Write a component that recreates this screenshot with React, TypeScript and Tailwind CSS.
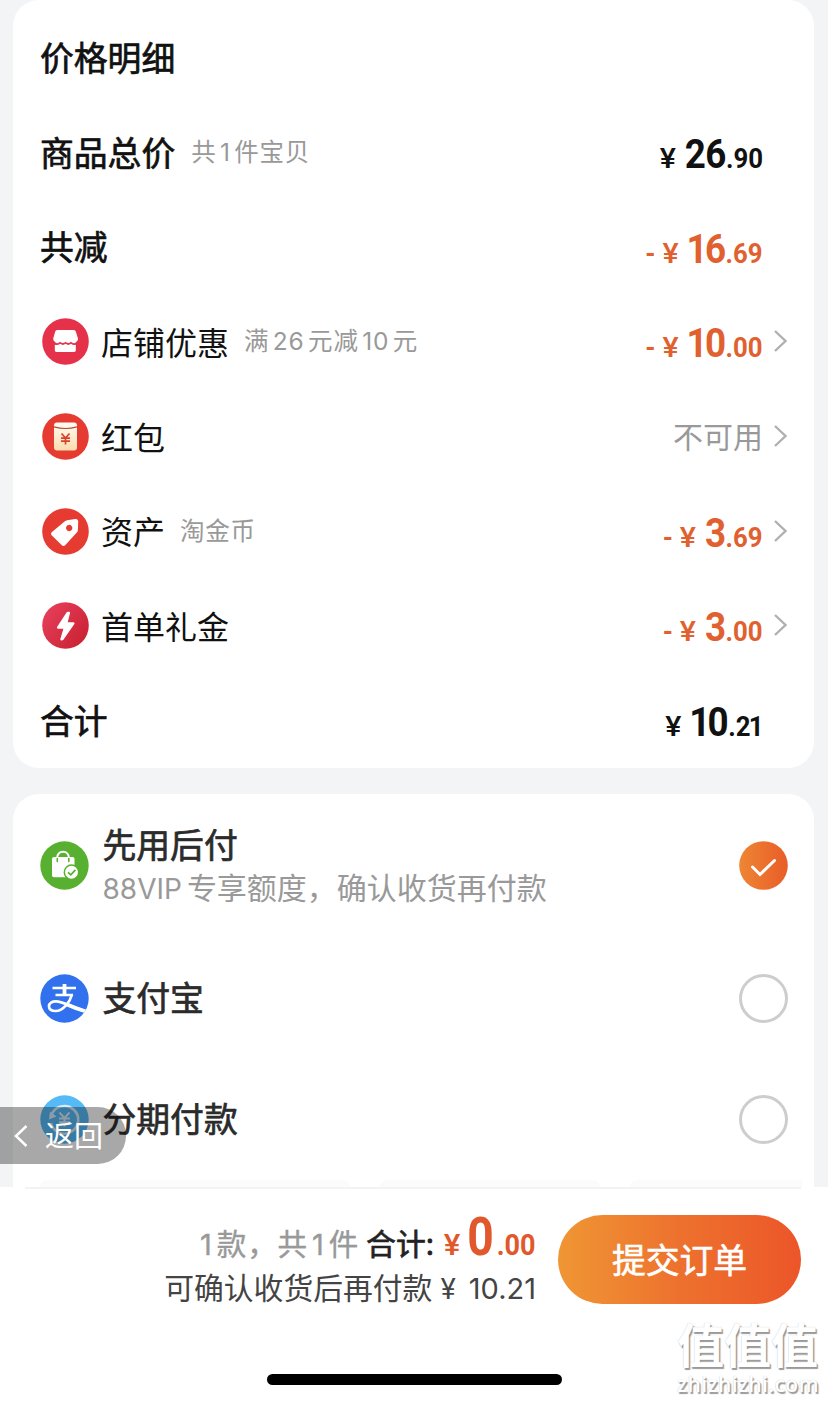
import type { ReactNode } from 'react';

const CJK = "font-['Noto_Sans_CJK_SC',sans-serif]";
const MEDIUM = '[-webkit-text-stroke:0.7px_currentColor]';

/* Sets the figure 1 narrower than the other figures. */
function Digits({ value, narrow }: { value: string; narrow: string }) {
  return (
    <>
      {value.split('').map((c, i) => (
        <span key={i} className={c === '1' ? narrow : ''}>{c}</span>
      ))}
    </>
  );
}

function Price({ int, dec, minus, className }: { int: string; dec: string; minus?: boolean; className: string }) {
  return (
    <div className={`relative top-[2px] flex origin-right scale-x-[0.92] items-baseline font-['Roboto',sans-serif] font-bold leading-none whitespace-nowrap ${className}`}>
      {minus && <span className="mr-[9px] text-[28px]">-</span>}
      <span className="mr-[11px] inline-block scale-x-[1.18] text-[28px] font-medium">¥</span>
      <span className="text-[40px] tracking-[-0.5px]"><Digits value={int} narrow="-ml-[1px] -mr-[2.5px]" /></span>
      <span className="text-[28px]">.<Digits value={dec} narrow="-ml-[2px] -mr-[1px]" /></span>
    </div>
  );
}

function Mixed({ text, digit }: { text: string; digit: string }) {
  return (
    <>
      {text.split(/(\d+)/).filter(Boolean).map((part, i) =>
        /\d/.test(part) ? <span key={i} className={digit}>{part}</span> : part,
      )}
    </>
  );
}

function Chevron() {
  return (
    <svg className="relative -top-px ml-[10px] h-6 w-[15px] shrink-0" viewBox="0 0 15 24" fill="none" stroke="#b0b0b0" strokeWidth="2.4">
      <path d="M2 2 L12.5 12 L2 22" />
    </svg>
  );
}

function Row({ icon, label, note, children, arrow, strong }: {
  icon?: ReactNode; label: string; note?: string; children?: ReactNode; arrow?: boolean; strong?: boolean;
}) {
  return (
    <div className="flex h-[94.7px] items-center pl-[27px] pr-[26px]">
      {icon && <div className="mr-[12px] mb-px ml-[2px] flex">{icon}</div>}
      <div className={`mb-[3px] leading-none whitespace-nowrap text-[#111] ${strong ? `text-[33.8px] ${MEDIUM}` : 'text-[32px]'}`}>{label}</div>
      {note && (
        <div className={`mb-[3px] text-[24.5px] leading-none tracking-[0.8px] whitespace-nowrap text-[#999] ${strong ? 'ml-[16px]' : 'ml-[15px]'}`}>
          <Mixed text={note} digit="mx-[3.5px] font-['Inter',sans-serif] text-[24.5px]" />
        </div>
      )}
      <div className={`ml-auto flex items-center ${arrow ? '' : 'mr-[25px]'}`}>
        {children}
        {arrow && <Chevron />}
      </div>
    </div>
  );
}

const ShopIcon = () => (
  <svg width="47" height="47" viewBox="0 0 47 47">
    <circle cx="23.5" cy="23.5" r="23.3" fill="#e5324a" />
    <path d="M15.500 12h16c1.100 0 1.900.6 2.300 1.600l2 6.400c.3 1 .3 1.700-.3 2.500l-1.300 1.600c-1.700 1.800-3.500 1.400-5.200-.3-1.800 1.700-3.600 1.700-5.400 0-1.800 1.700-3.600 1.700-5.400 0-1.700 1.700-3.500 2.100-5.200.3l-1.300-1.600c-.6-.8-.6-1.500-.3-2.500l1.800-6.400c.3-1 1.200-1.600 2.300-1.600z" fill="#fff" />
    <path d="M12.800 26.700c2 .7 3.800.3 5.400-.9 1.800 1.500 3.600 1.500 5.400 0 1.800 1.500 3.600 1.500 5.400 0 1.600 1.200 3.200 1.500 4.800.9v5.500c0 1-.7 1.700-1.700 1.700H14.500c-1 0-1.700-.7-1.700-1.700z" fill="#fff" />
  </svg>
);

const PacketIcon = () => (
  <svg width="47" height="47" viewBox="0 0 47 47">
    <defs>
      <linearGradient id="packet" x1="0" y1="0" x2="0" y2="1">
        <stop offset="0" stopColor="#fffdf5" />
        <stop offset="1" stopColor="#fbdcac" />
      </linearGradient>
    </defs>
    <circle cx="23.5" cy="23.5" r="23.3" fill="#e63b30" />
    <rect x="12" y="9.5" width="23" height="28" rx="3" fill="url(#packet)" />
    <path d="M12 13.8q11.5 3.400 23 0" fill="none" stroke="#b94a32" strokeWidth="1.2" />
    <path d="M19.5 20.500l4 4.500 4-4.500M19 25.200h9M19 28.200h9M23.5 25v6.500" fill="none" stroke="#d9402f" strokeWidth="1.7" />
  </svg>
);

const TagIcon = () => (
  <svg width="47" height="47" viewBox="0 0 47 47">
    <circle cx="23.5" cy="23.5" r="23.3" fill="#e63b30" />
    <path fillRule="evenodd" d="M25.300 12.300l7.900-1.300c1.800-.3 3 .8 3 2.500l-.3 8.500c0 1-.4 1.900-1.100 2.600L23.400 37c-1.200 1.200-2.600 1.200-3.800 0L9.900 27.600c-1.200-1.200-1.100-2.600.1-3.700l12.600-10.300c.8-.7 1.600-1.100 2.700-1.300zM27.200 16.800a3.200 3.200 0 1 0 .01 0z" fill="#fff" />
  </svg>
);

const BoltIcon = () => (
  <svg width="47" height="47" viewBox="0 0 47 47">
    <defs>
      <linearGradient id="bolt" x1="0" y1="0" x2="1" y2="0.8">
        <stop offset="0" stopColor="#ea4160" />
        <stop offset="1" stopColor="#c92231" />
      </linearGradient>
    </defs>
    <circle cx="23.5" cy="23.5" r="23.3" fill="url(#bolt)" />
    <path d="M24.500 10.500c.6-1.200 4-1.200 3.600.3l-2.400 9.400h5.500c1.400 0 1.800 1.100 1 2.100L21.400 37.800c-1.300 1.400-3.600.7-3-1l3-10h-5.100c-1.300 0-1.700-1-1.100-2z" fill="#fff" />
  </svg>
);

const BagIcon = () => (
  <svg width="49" height="49" viewBox="0 0 49 49">
    <circle cx="24.5" cy="24.5" r="24.2" fill="#58b030" />
    <path d="M17 17.500c0-4.300 2.600-6.700 6-6.700s6 2.400 6 6.700" fill="none" stroke="#fff" strokeWidth="2" />
    <rect x="12" y="16" width="22.5" height="20.3" rx="2" fill="#fff" />
    <path d="M17.300 17.500v3M28.800 17.500v3" stroke="#58b030" strokeWidth="1.6" strokeLinecap="round" />
    <circle cx="31.5" cy="31.3" r="7.2" fill="#fff" stroke="#58b030" strokeWidth="1.5" />
    <path d="M28 31.300l2.800 2.600 4.600-5" fill="none" stroke="#58b030" strokeWidth="1.7" />
  </svg>
);

const AlipayIcon = () => (
  <svg width="49" height="49" viewBox="0 0 49 49">
    <defs>
      <clipPath id="ali"><circle cx="24.5" cy="24.5" r="24.2" /></clipPath>
    </defs>
    <circle cx="24.5" cy="24.5" r="24.2" fill="#3271ee" />
    <g clipPath="url(#ali)" fill="none" stroke="#fff">
      <path d="M12.500 14h23.500M15.500 21h17.500" strokeWidth="2.3" />
      <path d="M24.500 10v11" strokeWidth="3.8" />
      <path d="M32 20.500C30 28 23 37 15.500 37c-4.300 0-6.500-2-6.500-4.700 0-3.300 3.100-5 7-5 6 0 12 4 27.500 9.500" strokeWidth="2.7" />
      <path d="M27 30.500c5 2.300 10 4.300 19 7" strokeWidth="3.8" />
    </g>
  </svg>
);

const InstallmentIcon = () => (
  <svg width="49" height="49" viewBox="0 0 49 49">
    <circle cx="24.5" cy="24.5" r="24.2" fill="#55baf5" />
    <path d="M11.500 20a13.800 13.800 0 1 1-.5 8" fill="none" stroke="#d5ecfa" strokeWidth="2.6" />
    <path d="M9 24.500l1-8 6.500 5z" fill="#d5ecfa" />
    <path d="M19.500 17.500l5 5.500 5-5.500M19 23.500h11M19 27.200h11M24.500 23v8.500" fill="none" stroke="#d5ecfa" strokeWidth="2" />
  </svg>
);

function PayRow({ icon, title, sub, checked, height }: { icon: ReactNode; title: string; sub?: string; checked?: boolean; height: string }) {
  return (
    <div className={`flex items-center pl-[27px] pr-[26px] ${height}`}>
      {icon}
      <div className="ml-[13.5px] whitespace-nowrap">
        <div className={`text-[33.8px] text-[#2b2b2b] ${sub ? 'pt-[2px] leading-[42px]' : 'mb-[2px] leading-[42px]'} ${MEDIUM}`}>{title}</div>
        {sub && (
          <div className="text-[30px] leading-[42px] text-[#999]">
            <span className="mr-[5px] font-['Inter',sans-serif] text-[28px]">88VIP</span>
            {sub}
          </div>
        )}
      </div>
      {checked ? (
        <svg className="ml-auto" width="49" height="49" viewBox="0 0 49 49">
          <defs>
            <linearGradient id="check" x1="0" y1="0" x2="1" y2="0">
              <stop offset="0" stopColor="#ee8634" />
              <stop offset="1" stopColor="#e95c28" />
            </linearGradient>
          </defs>
          <circle cx="24.5" cy="24.5" r="24.3" fill="url(#check)" />
          <path d="M13.500 26l7.500 7.500L35.500 19.500" fill="none" stroke="#fff" strokeWidth="3" strokeLinecap="round" />
        </svg>
      ) : (
        <div className="ml-auto h-[49px] w-[49px] rounded-full border-[3px] border-[#cdcdcd]" />
      )}
    </div>
  );
}

export default function App() {
  return (
    <div className={`relative flex h-[1402px] w-[828px] flex-col overflow-hidden bg-[#f3f4f6] ${CJK}`}>
      <section className="mr-[14px] ml-[13px] h-[768px] shrink-0 rounded-[26px] bg-white pt-[11px]">
        <Row strong label="价格明细" />
        <Row strong label="商品总价" note="共1件宝贝">
          <Price int="26" dec="90" className="text-[#111]" />
        </Row>
        <Row strong label="共减">
          <Price minus int="16" dec="69" className="text-[#e0612f]" />
        </Row>
        <Row icon={<ShopIcon />} label="店铺优惠" note="满26元减10元" arrow>
          <Price minus int="10" dec="00" className="text-[#e0612f]" />
        </Row>
        <Row icon={<PacketIcon />} label="红包" arrow>
          <div className="mb-[5px] text-[30px] leading-none text-[#999]">不可用</div>
        </Row>
        <Row icon={<TagIcon />} label="资产" note="淘金币" arrow>
          <Price minus int="3" dec="69" className="text-[#e0612f]" />
        </Row>
        <Row icon={<BoltIcon />} label="首单礼金" arrow>
          <Price minus int="3" dec="00" className="text-[#e0612f]" />
        </Row>
        <Row strong label="合计">
          <Price int="10" dec="21" className="text-[#111]" />
        </Row>
      </section>

      <section className="mt-[26px] mr-[14px] ml-[13px] flex h-[393px] shrink-0 flex-col rounded-t-[26px] bg-white">
        <PayRow height="h-[142px]" icon={<BagIcon />} title="先用后付" sub="专享额度，确认收货再付款" checked />
        <PayRow height="h-[124px]" icon={<AlipayIcon />} title="支付宝" />
        <PayRow height="h-[118px]" icon={<InstallmentIcon />} title="分期付款" />
        <div className="mt-auto flex h-[7px] gap-[30px] pr-[12px] pl-[27px]">
          <div className="w-[310px] rounded-t-[14px] bg-[#fbfbfb]" />
          <div className="w-[220px] rounded-t-[14px] bg-[#fbfbfb]" />
          <div className="flex-1 rounded-tl-[14px] bg-[#fbfbfb]" />
        </div>
      </section>

      <footer className="flex h-[215px] shrink-0 flex-col bg-white">
        <div className="mr-[27px] ml-[25px] h-[2px] bg-[#f3f3f3]" />
        <div className="flex justify-end pt-[26px] pr-[27px]">
          <div className="mr-[22px] flex flex-col items-end">
            <div className="-mt-[4px] flex h-[51px] items-baseline leading-[51px] whitespace-nowrap">
              <span className="mr-[7px] text-[29.5px] tracking-[0.9px] text-[#999] [-webkit-text-stroke:0.4px_currentColor]">
                <Mixed text="1款，共1件" digit="mx-[4px] font-['Inter',sans-serif] text-[29px]" />
              </span>
              <span className={`text-[29.8px] text-[#222] ${MEDIUM}`}>合计:</span>
              <div className="flex w-[102px] items-baseline justify-end font-['Roboto',sans-serif] font-bold text-[#e0582b]">
                <div className="flex origin-right scale-x-[0.9] items-baseline">
                  <span className="mr-[9px] inline-block scale-x-[1.2] text-[29px] font-medium">¥</span>
                  <span className="mr-[2px] inline-block scale-x-[0.95] text-[54px]">0</span>
                  <span className="text-[30px]">.00</span>
                </div>
              </div>
            </div>
            <div className="flex items-baseline text-[29.8px] leading-[48px] whitespace-nowrap text-[#444]">
              可确认收货后再付款
              <span className="ml-[8px] font-['Inter',sans-serif] text-[28px]">¥</span>
              <span className="ml-[13px] font-['Inter',sans-serif] text-[29px]">10.21</span>
            </div>
          </div>
          <button className="flex h-[89px] w-[243px] items-center justify-center rounded-full bg-linear-to-r from-[#ef9634] via-[#ed712e] to-[#ec5529] pb-[2px] text-[33.8px] leading-none text-white [-webkit-text-stroke:0.6px_currentColor]">
            提交订单
          </button>
        </div>
        <div className="mx-auto mt-auto mb-[17px] h-[11px] w-[295px] rounded-full bg-black" />
      </footer>

      <div className="absolute top-[1107px] left-0 flex h-[57px] w-[126px] items-center rounded-r-[28px] bg-black/[0.34] text-white">
        <svg className="ml-[13px]" width="15" height="24" viewBox="0 0 15 24" fill="none" stroke="#fff" strokeWidth="2.5">
          <path d="M13.500 2L3 12l10.500 10" />
        </svg>
        <span className="mb-[2px] ml-[17px] text-[29px] leading-none">返回</span>
      </div>

      <div className="absolute top-[1315px] left-[677px] flex w-[144px] flex-col whitespace-nowrap text-white [text-shadow:1.5px_1.5px_1px_#999,0_0_1px_#bbb]">
        <div className="text-[47px] leading-[56px] font-bold">值值值</div>
        <div className="mt-px font-['Open_Sans',sans-serif] text-[21px] leading-[25px] font-semibold tracking-[0.4px]">zhizhizhi.com</div>
      </div>
    </div>
  );
}
